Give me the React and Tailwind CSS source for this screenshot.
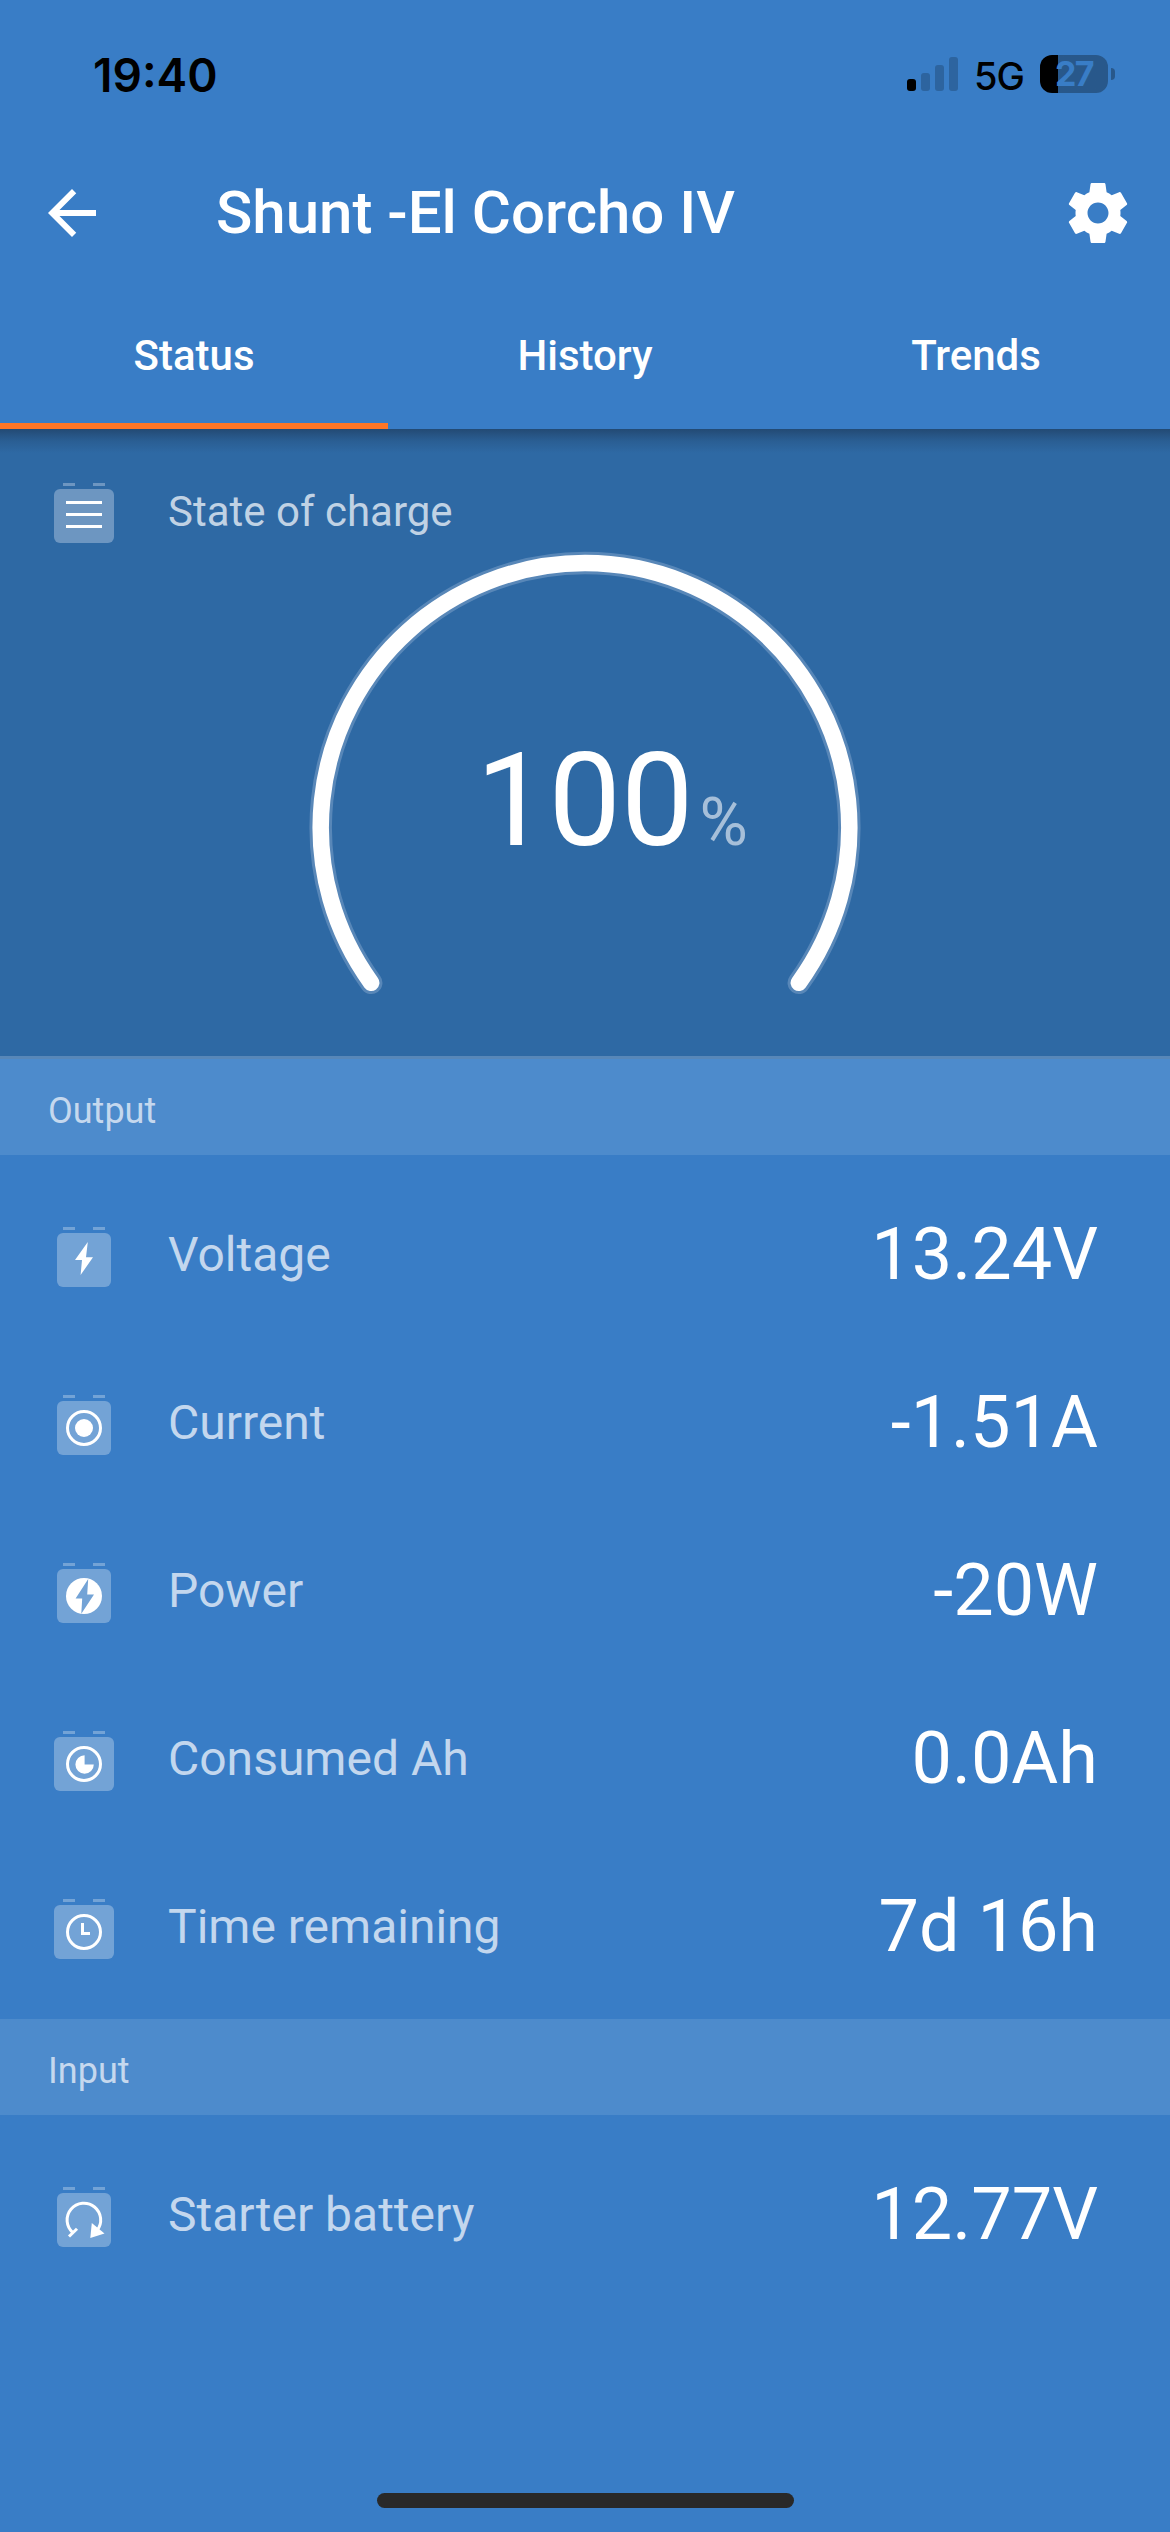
function StatusBar() {
  return (
    <div className="flex h-[150px] items-start justify-between pt-[55px] pr-[55px] pl-[93px] font-[Inter] text-black">
      <div className="mt-[-2px] text-[46px] leading-[44px] font-semibold">19:40</div>
      <div className="flex items-start">
        <svg className="mt-[2px] h-[34px] w-[51px]" viewBox="0 0 51 34">
          <rect x="0" y="22" width="9" height="12" rx="3" fill="#000" />
          <rect x="14" y="16" width="9" height="18" rx="3" fill="#2d649f" />
          <rect x="28" y="8" width="9" height="26" rx="3" fill="#2d649f" />
          <rect x="42" y="0" width="9" height="34" rx="3" fill="#2d649f" />
        </svg>
        <div className="ml-[16px] w-[66px] text-[38px] leading-[42px] font-medium tracking-[-1px]">5G</div>
        <div className="flex items-center">
          <div className="flex h-[38px] w-[68px] items-center justify-center rounded-[12px] bg-linear-to-r from-black from-[26.5%] to-[#28588b] to-[26.5%] text-[34px] leading-[38px] font-bold tracking-[-1.5px] text-[#397dc6]">
            27
          </div>
          <div className="ml-[3px] h-[12px] w-[4px] rounded-r-full bg-[#28588b]" />
        </div>
      </div>
    </div>
  );
}

function TitleBar() {
  return (
    <div className="flex h-[126px] items-center pr-[36px] pl-[36px]">
      <svg className="h-[72px] w-[72px]" viewBox="0 0 24 24" fill="#fff">
        <path d="M20 11H7.83l5.59-5.59L12 4l-8 8 8 8 1.41-1.41L7.83 13H20v-2z" />
      </svg>
      <h1 className="mt-[-1px] ml-[108px] flex-1 text-[60px] leading-[72px] font-medium">Shunt -El Corcho IV</h1>
      <svg className="h-[72px] w-[72px]" viewBox="0 0 24 24" fill="#fff">
        <path d="M19.43 12.98c.04-.32.07-.64.07-.98s-.03-.66-.07-.98l2.11-1.65c.19-.15.24-.42.12-.64l-2-3.46c-.12-.22-.39-.3-.61-.22l-2.49 1c-.52-.4-1.08-.73-1.69-.98l-.38-2.65C14.46 2.18 14.25 2 14 2h-4c-.25 0-.46.18-.49.42l-.38 2.65c-.61.25-1.17.59-1.69.98l-2.49-1c-.23-.09-.49 0-.61.22l-2 3.46c-.13.22-.07.49.12.64l2.11 1.65c-.04.32-.07.65-.07.98s.03.66.07.98l-2.11 1.65c-.19.15-.24.42-.12.64l2 3.46c.12.22.39.3.61.22l2.49-1c.52.4 1.08.73 1.69.98l.38 2.65c.03.24.24.42.49.42h4c.25 0 .46-.18.49-.42l.38-2.65c.61-.25 1.17-.59 1.69-.98l2.49 1c.23.09.49 0 .61-.22l2-3.46c.12-.22.07-.49-.12-.64l-2.11-1.65zM12 15.5c-1.93 0-3.5-1.57-3.5-3.5s1.57-3.5 3.5-3.5 3.5 1.57 3.5 3.5-1.57 3.5-3.5 3.5z" />
      </svg>
    </div>
  );
}

function Tabs() {
  return (
    <nav className="grid h-[153px] grid-cols-3 gap-[3px] text-center text-[42px] leading-[48px] font-medium">
      <div className="border-b-[6px] border-[#ff7626] pt-[56px]">Status</div>
      <div className="pt-[56px]">History</div>
      <div className="pt-[56px]">Trends</div>
    </nav>
  );
}

/* Battery outline on a 72x72 grid; children draw the glyph on its face. */
function BatteryIcon({ wide, color = '#73a3d6', children }) {
  return (
    <svg className="h-[72px] w-[72px] shrink-0" viewBox="0 0 72 72">
      <rect x="15" y="6" width="12" height="3" fill={color} />
      <rect x="45" y="6" width="12" height="3" fill={color} />
      <rect x={wide ? 6 : 9} y="12" width={wide ? 60 : 54} height="54" rx="6" fill={color} />
      {children}
    </svg>
  );
}

const ring = <circle cx="36" cy="39" r="16.5" fill="none" stroke="#fff" strokeWidth="3" />;

const glyphs = {
  voltage: <path d="M39.8 21L27 39h7l-1.400 15L45 36.200h-7z" fill="#fff" />,
  current: (
    <>
      {ring}
      <circle cx="36" cy="39" r="9" fill="#fff" />
    </>
  ),
  power: (
    <>
      <circle cx="36" cy="39" r="18" fill="#fff" />
      <path d="M40.200 22L27.600 41.500h6.600l-0.900 15.300L46 37.600h-6.800z" fill="#73a3d6" />
    </>
  ),
  consumed: (
    <>
      {ring}
      <path d="M36.600 39.500V30.300A9.200 9.200 0 1 0 45.800 39.500z" fill="#fff" />
    </>
  ),
  time: (
    <>
      {ring}
      <path d="M34.500 30v10.500H42" fill="none" stroke="#fff" strokeWidth="3" />
    </>
  ),
  starter: (
    <>
      <path d="M25 51.800A16.800 16.800 0 1 1 49 49.500" fill="none" stroke="#fff" strokeWidth="3" />
      <path d="M21 55.500l8-7.800" stroke="#fff" strokeWidth="3" />
      <path d="M43.800 42l-1.500 15 14.200-4.400z" fill="#fff" />
    </>
  ),
};

function Gauge() {
  const arc = 'M71.200 442.800A264.300 264.300 0 1 1 498.800 442.800';
  return (
    <section className="h-[630px] border-b-[3px] border-[#5887b8] bg-[#2e69a4]">
      <div className="h-[24px] bg-linear-to-b from-[#234a74] via-[#2a5e93] to-[#2e69a4]" />
      <div className="mt-[24px] flex h-[72px] items-center px-[48px]">
        <BatteryIcon wide color="#6d96c1">
          <path d="M18 25.500h36M18 37.500h36M18 49.500h36" stroke="#fff" strokeWidth="3" />
        </BatteryIcon>
        <span className="mb-[2px] ml-[48px] text-[42px] leading-[48px] text-[#c0d2e4]">State of charge</span>
      </div>
      <div className="relative mx-auto mt-[-9px] h-[460px] w-[570px]">
        <svg className="h-[460px] w-[570px]" viewBox="0 0 570 460" fill="none" strokeLinecap="round">
          <path d={arc} stroke="#5887b8" strokeWidth="22.500" />
          <path d={arc} stroke="#fff" strokeWidth="16.500" />
        </svg>
        <div className="absolute inset-x-0 top-[186px] flex items-baseline pl-[176px]">
          <span className="text-[129px] leading-[150px]">100</span>
          <span className="ml-[6px] text-[66px] leading-[80px] text-[#a6bfd9]">%</span>
        </div>
      </div>
    </section>
  );
}

function SectionTitle({ children }) {
  return (
    <div className="h-[96px] bg-[#4d8bcc] pt-[31px] pl-[48px] text-[36px] leading-[42px] text-[#c5d8ee]">
      {children}
    </div>
  );
}

function Row({ icon, wide, label, value }) {
  return (
    <div className="flex h-[168px] items-center pr-[72px] pl-[48px]">
      <BatteryIcon wide={wide}>{glyphs[icon]}</BatteryIcon>
      <span className="mb-[4px] ml-[48px] flex-1 text-[48px] leading-[56px] text-[#c3d7ee]">{label}</span>
      <span className="mb-[5px] text-[72px] leading-[84px]">{value}</span>
    </div>
  );
}

export default function App() {
  return (
    <div className="flex h-[2532px] w-[1170px] flex-col overflow-hidden bg-[#397dc6] font-[Roboto] text-white">
      <header>
        <StatusBar />
        <TitleBar />
        <Tabs />
      </header>
      <Gauge />
      <SectionTitle>Output</SectionTitle>
      <div className="pt-[18px] pb-[6px]">
        <Row icon="voltage" label="Voltage" value="13.24V" />
        <Row icon="current" label="Current" value="-1.51A" />
        <Row icon="power" label="Power" value="-20W" />
        <Row icon="consumed" wide label="Consumed Ah" value="0.0Ah" />
        <Row icon="time" wide label="Time remaining" value="7d 16h" />
      </div>
      <SectionTitle>Input</SectionTitle>
      <div className="pt-[18px] pb-[6px]">
        <Row icon="starter" label="Starter battery" value="12.77V" />
      </div>
      <div className="mx-auto mt-auto mb-[24px] h-[15px] w-[417px] rounded-full bg-[#292929]" />
    </div>
  );
}
